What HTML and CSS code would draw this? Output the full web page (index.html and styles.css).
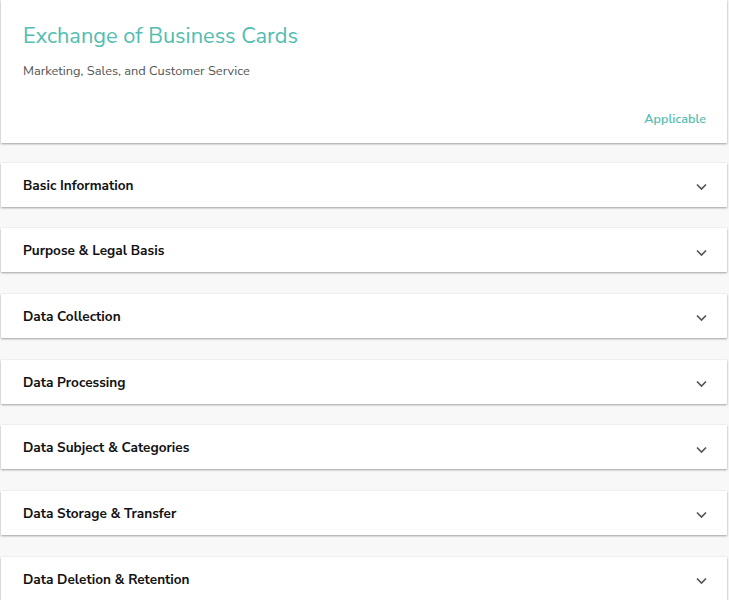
FILE: index.html
```html
<!DOCTYPE html>
<html>
<head>
<meta charset="utf-8">
<link rel="stylesheet" href="styles.css">
</head>
<body>
<div class="page">
  <div class="card header">
    <h1 class="title">Exchange of Business Cards</h1>
    <p class="subtitle">Marketing, Sales, and Customer Service</p>
    <div class="status">Applicable</div>
  </div>
  <div class="sections">
    <div class="card row"><span class="row-label">Basic Information</span><svg class="chev" width="11" height="8" viewBox="0 0 11 8"><path d="M1 1.5 L5.5 6 L10 1.5" fill="none" stroke="#555" stroke-width="1.7"/></svg></div>
    <div class="card row"><span class="row-label">Purpose &amp; Legal Basis</span><svg class="chev" width="11" height="8" viewBox="0 0 11 8"><path d="M1 1.5 L5.5 6 L10 1.5" fill="none" stroke="#555" stroke-width="1.7"/></svg></div>
    <div class="card row"><span class="row-label">Data Collection</span><svg class="chev" width="11" height="8" viewBox="0 0 11 8"><path d="M1 1.5 L5.5 6 L10 1.5" fill="none" stroke="#555" stroke-width="1.7"/></svg></div>
    <div class="card row"><span class="row-label">Data Processing</span><svg class="chev" width="11" height="8" viewBox="0 0 11 8"><path d="M1 1.5 L5.5 6 L10 1.5" fill="none" stroke="#555" stroke-width="1.7"/></svg></div>
    <div class="card row"><span class="row-label">Data Subject &amp; Categories</span><svg class="chev" width="11" height="8" viewBox="0 0 11 8"><path d="M1 1.5 L5.5 6 L10 1.5" fill="none" stroke="#555" stroke-width="1.7"/></svg></div>
    <div class="card row"><span class="row-label">Data Storage &amp; Transfer</span><svg class="chev" width="11" height="8" viewBox="0 0 11 8"><path d="M1 1.5 L5.5 6 L10 1.5" fill="none" stroke="#555" stroke-width="1.7"/></svg></div>
    <div class="card row"><span class="row-label">Data Deletion &amp; Retention</span><svg class="chev" width="11" height="8" viewBox="0 0 11 8"><path d="M1 1.5 L5.5 6 L10 1.5" fill="none" stroke="#555" stroke-width="1.7"/></svg></div>
  </div>
</div>
</body>
</html>
```
FILE: styles.css
```css
html, body {
  margin: 0;
  padding: 0;
  background: #f8f8f8;
  font-family: "Nunito Sans", Lato, "Open Sans", sans-serif;
}
.page {
  padding: 0 2px 0 1px;
}
.card {
  background: #fff;
  box-shadow: 0 1px 2px rgba(0,0,0,0.35), 0 0 1px rgba(0,0,0,0.08);
}
.header {
  height: 143px;
  box-sizing: border-box;
  padding: 22px 21px 0 22px;
  display: flex;
  flex-direction: column;
}
.title {
  margin: 0;
  font-size: 21.8px;
  font-weight: 400;
  color: #52bdb0;
  line-height: 28px;
}
.subtitle {
  margin: 13px 0 0;
  font-size: 12.8px;
  color: #555;
  line-height: 16px;
}
.status {
  margin-top: 32px;
  align-self: flex-end;
  font-size: 12.6px;
  font-weight: 600;
  color: #52bdb0;
  line-height: 16px;
}
.sections {
  display: flex;
  flex-direction: column;
  gap: 21.7px;
  padding-top: 19.5px;
}
.row {
  height: 44px;
  box-sizing: border-box;
  padding: 1px 20px 0 22px;
  display: flex;
  align-items: center;
  justify-content: space-between;
}
.row-label {
  font-size: 13.6px;
  font-weight: 700;
  color: #111;
}
.chev {
  margin-top: 4px;
}
```
